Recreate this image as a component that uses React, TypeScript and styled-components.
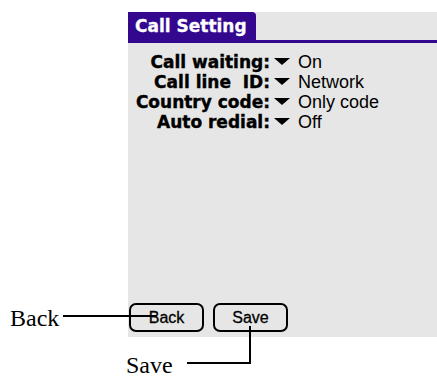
import React from "react";
import styled, { createGlobalStyle } from "styled-components";

const settings = [
  { label: "Call waiting:", value: "On" },
  { label: "Call line\u00a0 ID:", value: "Network" },
  { label: "Country code:", value: "Only code" },
  { label: "Auto redial:", value: "Off" },
];

const App = () => {
  return (
    <Page>
      <GlobalStyle />
      <Screen>
        <TitleBar>
          <Tab>Call Setting</Tab>
        </TitleBar>
        <Form>
          {settings.map((s) => (
            <Row key={s.label}>
              <Label>{s.label}</Label>
              <Arrow />
              <Value>{s.value}</Value>
            </Row>
          ))}
        </Form>
        <Buttons>
          <Button>Back</Button>
          <Button>Save</Button>
        </Buttons>
      </Screen>

      <Callout style={{ left: 10, top: 306 }}>Back</Callout>
      <Line style={{ left: 63, top: 315, width: 94, height: 2 }} />
      <Callout style={{ left: 126, top: 353 }}>Save</Callout>
      <Line style={{ left: 187, top: 362, width: 64, height: 2 }} />
      <Line style={{ left: 249, top: 326, width: 2, height: 38 }} />
    </Page>
  );
};

export default App;

const GlobalStyle = createGlobalStyle`
  body {
    margin: 0;
    background: #fff;
  }
`;

const Page = styled.div`
  position: relative;
  width: 437px;
  height: 377px;
  padding: 12px 0 0 128px;
  box-sizing: border-box;
  overflow: hidden;
`;

const Screen = styled.div`
  display: flex;
  flex-direction: column;
  width: 309px;
  height: 325px;
  background: #e6e6e6;
`;

const TitleBar = styled.div`
  display: flex;
  height: 28px;
  border-bottom: 3px solid #33088f;
`;

const Tab = styled.div`
  display: flex;
  align-items: center;
  width: 128px;
  padding-left: 7px;
  box-sizing: border-box;
  background: #33088f;
  border-top-right-radius: 4px;
  color: #fff;
  font-family: "DejaVu Sans", sans-serif;
  font-weight: bold;
  font-size: 17px;
  -webkit-text-stroke: 0.3px #fff;
`;

const Form = styled.div`
  display: flex;
  flex-direction: column;
  margin-top: 9px;
`;

const Row = styled.div`
  display: grid;
  grid-template-columns: 142px 16px auto;
  column-gap: 4px;
  align-items: center;
  height: 20px;
`;

const Label = styled.div`
  text-align: right;
  white-space: nowrap;
  font-family: "DejaVu Sans", sans-serif;
  font-weight: bold;
  font-size: 17px;
  line-height: 20px;
  color: #000;
  -webkit-text-stroke: 0.4px #000;
`;

const Arrow = styled.div`
  width: 0;
  height: 0;
  border-left: 8px solid transparent;
  border-right: 8px solid transparent;
  border-top: 7px solid #000;
  margin-top: -2px;
`;

const Value = styled.div`
  margin-left: 4px;
  font-family: "Liberation Sans", sans-serif;
  font-size: 18px;
  line-height: 20px;
  color: #000;
`;

const Buttons = styled.div`
  display: flex;
  gap: 9px;
  margin-top: auto;
  padding: 0 0 5px 1px;
`;

const Button = styled.button`
  width: 75px;
  height: 29px;
  padding: 0;
  border: 2px solid #000;
  border-radius: 7px;
  background: transparent;
  font-family: "Liberation Sans", sans-serif;
  font-size: 16px;
  color: #000;
  -webkit-text-stroke: 0.3px #000;
`;

const Callout = styled.span`
  position: absolute;
  font-family: "Liberation Serif", serif;
  font-size: 24px;
  line-height: 24px;
  color: #000;
`;

const Line = styled.div`
  position: absolute;
  background: #000;
`;
